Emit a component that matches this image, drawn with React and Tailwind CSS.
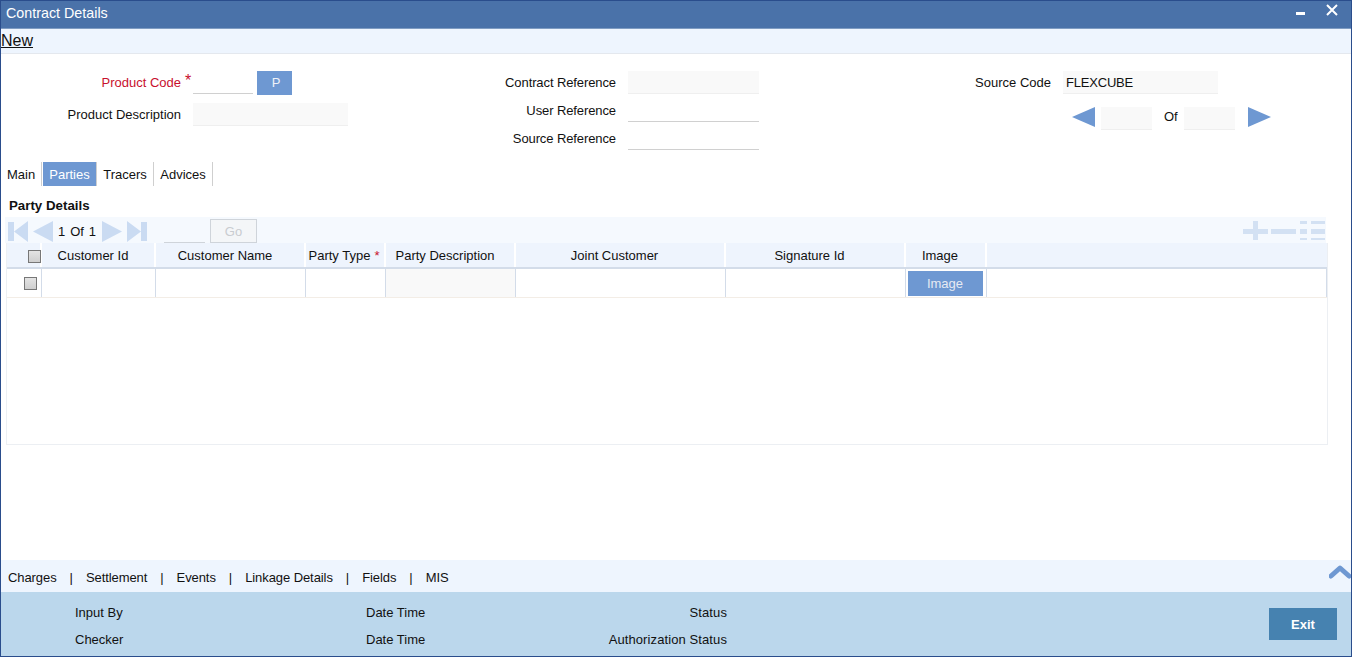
const Field = ({ w, line = false, children }) => (
  <div className={`h-[23px] border-b px-[3px] flex items-center ${w} ${line ? "bg-white border-[#d0d0d0]" : "bg-[#f9f9f9] border-[#efefef]"}`}>{children}</div>
);

const Row = ({ label, labelW, className = "", children }) => (
  <div className={`flex items-center h-[23px] ${className}`}>
    <div className={`text-right ${labelW}`}>{label}</div>
    {children}
  </div>
);

const Arrow = ({ dir, color = "#6e98d2" }) => (
  <svg width="23" height="20" viewBox="0 0 23 20" className="-mt-[3px]">
    <path d={dir === "left" ? "M0 10 L23 0 L23 20 Z" : "M23 10 L0 0 L0 20 Z"} fill={color} />
  </svg>
);

const Check = ({ className = "" }) => (
  <div className={`w-[13px] h-[13px] shrink-0 border border-[#777] bg-[linear-gradient(#e4e4e4,#cfcfcf)] ${className}`} />
);

const cols = ["w-[35px]", "w-[114px]", "w-[150px]", "w-[80px]", "w-[130px]", "w-[210px]", "w-[180px]", "w-[81px]", "flex-1"];
const headPad = ["", "pr-[10px]", "pr-[10px]", "pr-[2px]", "pr-[10px]", "pr-[11px]", "pr-[11px]", "pr-[11px]", ""];

const PagerIcon = ({ type }) => {
  const c = "#cadbf2";
  const k = "mt-[3px]";
  if (type === "first") return <svg className={k} width="20" height="21" viewBox="0 0 20 21"><path d="M0 1h6v19H0zM20 0v21L6 10.5z" fill={c} /></svg>;
  if (type === "prev") return <svg className={k} width="20" height="21" viewBox="0 0 20 21"><path d="M20 0v21L0 10.5z" fill={c} /></svg>;
  if (type === "next") return <svg className={k} width="20" height="21" viewBox="0 0 20 21"><path d="M0 0v21l20-10.5z" fill={c} /></svg>;
  return <svg className={k} width="20" height="21" viewBox="0 0 20 21"><path d="M14 1h6v19h-6zM0 0v21l14-10.5z" fill={c} /></svg>;
};

export default function App() {
  return (
    <div className="w-[1352px] h-[657px] flex flex-col bg-white border-x border-b border-[#2a4d8c] overflow-hidden text-[13px] leading-none text-[#111] font-['Liberation_Sans',Arial,sans-serif]">
      <div className="h-[29px] shrink-0 bg-[#4a72a9] border-t border-[#2a4d8c] border-b border-b-[#7f9cc2] flex items-center pl-[5px] text-white text-[14.3px]">
        <span className="-mt-[3px]">Contract Details</span>
        <div className="ml-auto flex items-start h-full pr-[13px]">
          <div className="w-[9px] h-[3px] bg-white mt-[11px] mr-[21px]" />
          <svg width="12" height="12" viewBox="0 0 12 12" className="mt-[3px]"><path d="M1 1l10 10M11 1L1 11" stroke="#fff" strokeWidth="2" /></svg>
        </div>
      </div>

      <div className="h-[25px] shrink-0 bg-[#eef5fe] border-b border-[#e4e8ee] flex items-center text-[16px]">
        <span className="underline">New</span>
      </div>

      <div className="flex h-[100px] shrink-0 pt-[17px]">
        <div className="w-[455px] shrink-0 flex flex-col gap-[9px]">
          <Row label="Product Code" labelW="w-[180px] text-[#c8102e]">
            <span className="w-[12px] text-[#c8102e] text-[16px] pl-[4px] self-start mt-[2px]">*</span>
            <Field w="w-[60px]" line />
            <div className="ml-[4px] w-[35px] h-[24px] pl-[3px] bg-[#6e98d2] text-[#eef2f8] flex items-center justify-center">P</div>
          </Row>
          <Row label="Product Description" labelW="w-[180px]">
            <span className="w-[12px]" />
            <Field w="w-[155px]" />
          </Row>
        </div>
        <div className="w-[305px] shrink-0 flex flex-col gap-[5px] tracking-[-0.1px]">
          <Row label="Contract Reference" labelW="w-[160px]" className="gap-[12px]"><Field w="w-[131px]" /></Row>
          <Row label="User Reference" labelW="w-[160px]" className="gap-[12px]"><Field w="w-[131px]" line /></Row>
          <Row label="Source Reference" labelW="w-[160px]" className="gap-[12px]"><Field w="w-[131px]" line /></Row>
        </div>
        <div className="flex-1 flex flex-col gap-[13px]">
          <Row label="Source Code" labelW="w-[290px]" className="gap-[12px]">
            <Field w="w-[155px]"><span className="tracking-[-0.2px]">FLEXCUBE</span></Field>
          </Row>
          <div className="flex items-center h-[23px] pl-[311px]">
            <Arrow dir="left" />
            <div className="ml-[6px]"><Field w="w-[51px]" /></div>
            <span className="ml-[12px] w-[20px] -mt-[4px]">Of</span>
            <Field w="w-[51px]" />
            <div className="ml-[13px] flex"><Arrow dir="right" /></div>
          </div>
        </div>
      </div>

      <div className="flex items-stretch h-[24px] mt-[8px] ml-[1px] shrink-0">
        <div className="w-[40px] pl-[5px] flex items-center border-r border-[#cfcfcf]">Main</div>
        <div className="ml-[1px] w-[54px] bg-[#6e98d2] text-white flex items-center justify-center border-r border-[#cfcfcf]">Parties</div>
        <div className="w-[57px] flex items-center justify-center border-r border-[#cfcfcf]">Tracers</div>
        <div className="w-[59px] flex items-center justify-center border-r border-[#cfcfcf]">Advices</div>
      </div>

      <div className="ml-[8px] mt-[12px] h-[16px] font-bold text-[13.3px] shrink-0 flex items-center">Party Details</div>

      <div className="ml-[4px] w-[1321px] h-[26px] mt-[3px] shrink-0 bg-[#f5f9fe] flex items-center pl-[3px]">
        <PagerIcon type="first" />
        <div className="w-[5px]" />
        <PagerIcon type="prev" />
        <span className="ml-[5px] w-[38px] mt-[2px] flex justify-between"><span>1</span><span>Of</span><span>1</span></span>
        <div className="w-[6px]" />
        <PagerIcon type="next" />
        <div className="w-[5px]" />
        <PagerIcon type="last" />
        <div className="ml-[17px] w-[41px] h-[23px] self-end border-b border-[#cfd4da]" />
        <div className="ml-[5px] mt-[2px] w-[47px] h-[24px] bg-[#f4f6f8] border border-[#cfd4da] text-[#c9ccd0] flex items-center justify-center">Go</div>
        <div className="ml-auto flex items-center gap-[3px] pr-[1px]">
          <svg width="25" height="19" viewBox="0 0 25 19"><path d="M0 8h25v5H0zM10 0h5v19h-5z" fill="#d3e1f3" /></svg>
          <svg width="25" height="19" viewBox="0 0 25 19"><path d="M0 8h25v5H0z" fill="#d3e1f3" /></svg>
          <svg width="25" height="19" viewBox="0 0 25 19" className="ml-[1px]"><path d="M0 0h7v3H0zM11 0h14v3H11zM0 8h7v5H0zM11 8h14v5H11zM0 17h7v2H0zM11 17h14v2H11z" fill="#d3e1f3" /></svg>
        </div>
      </div>

      <div className="ml-[5px] w-[1322px] h-[202px] shrink-0 border-x border-b border-[#eceff3] flex flex-col">
        <div className="h-[26px] flex bg-[#eef4fd] border-b-2 border-[#d3dce9]">
          {["", "Customer Id", "Customer Name", "Party Type", "Party Description", "Joint Customer", "Signature Id", "Image", ""].map((t, i) => (
            <div key={i} className={`${cols[i]} ${headPad[i]} pt-[1px] shrink-0 flex items-center justify-center border-r-2 border-white last:border-r-0`}>
              {i === 0 ? <Check className="ml-[22px] mt-[2px]" /> : t}
              {i === 3 ? <span className="text-[#c8102e] ml-[4px]">*</span> : null}
            </div>
          ))}
        </div>
        <div className="h-[29px] flex border-b border-[#f3ede6]">
          {cols.map((c, i) => (
            <div key={i} className={`${c} shrink-0 flex items-center justify-center border-r border-[#d3dce9] ${i === 4 ? "bg-[#f9f9f9]" : ""}`}>
              {i === 0 ? <Check className="ml-[12px]" /> : null}
              {i === 7 ? <div className="w-[75px] h-[25px] mr-[2px] bg-[#6e98d2] text-[#e6eaf2] flex items-center justify-center">Image</div> : null}
            </div>
          ))}
        </div>
      </div>

      <div className="flex-1" />

      <div className="h-[32px] shrink-0 bg-[#eef5fe] flex items-center pl-[7px] pt-[3px] relative tracking-[-0.08px]">
        {["Charges", "Settlement", "Events", "Linkage Details", "Fields", "MIS"].map((t, i) => (
          <div key={t} className="flex items-center">
            {i > 0 ? <span className="mx-[13px]">|</span> : null}
            <span>{t}</span>
          </div>
        ))}
        <svg width="22" height="15" viewBox="0 0 22 15" className="absolute right-0 top-[4px]"><path d="M2 12L11 4l9 8" fill="none" stroke="#6e98d2" strokeWidth="5" strokeLinecap="round" strokeLinejoin="round" /></svg>
      </div>

      <div className="h-[64px] shrink-0 bg-[#bbd7ec] flex relative pl-[74px]">
        <div className="w-[291px] pt-[14px] flex flex-col gap-[14px]"><span className="h-[13px]">Input By</span><span className="h-[13px]">Checker</span></div>
        <div className="w-[243px] pt-[14px] flex flex-col gap-[14px]"><span className="h-[13px]">Date Time</span><span className="h-[13px]">Date Time</span></div>
        <div className="w-[118px] pt-[14px] flex flex-col gap-[14px] items-end tracking-[0.1px]"><span className="h-[13px]">Status</span><span className="h-[13px] whitespace-nowrap">Authorization Status</span></div>
        <div className="ml-auto mr-[14px] mt-[16px] w-[68px] h-[32px] bg-[#4682b0] text-white font-bold flex items-center justify-center">Exit</div>
      </div>
    </div>
  );
}
